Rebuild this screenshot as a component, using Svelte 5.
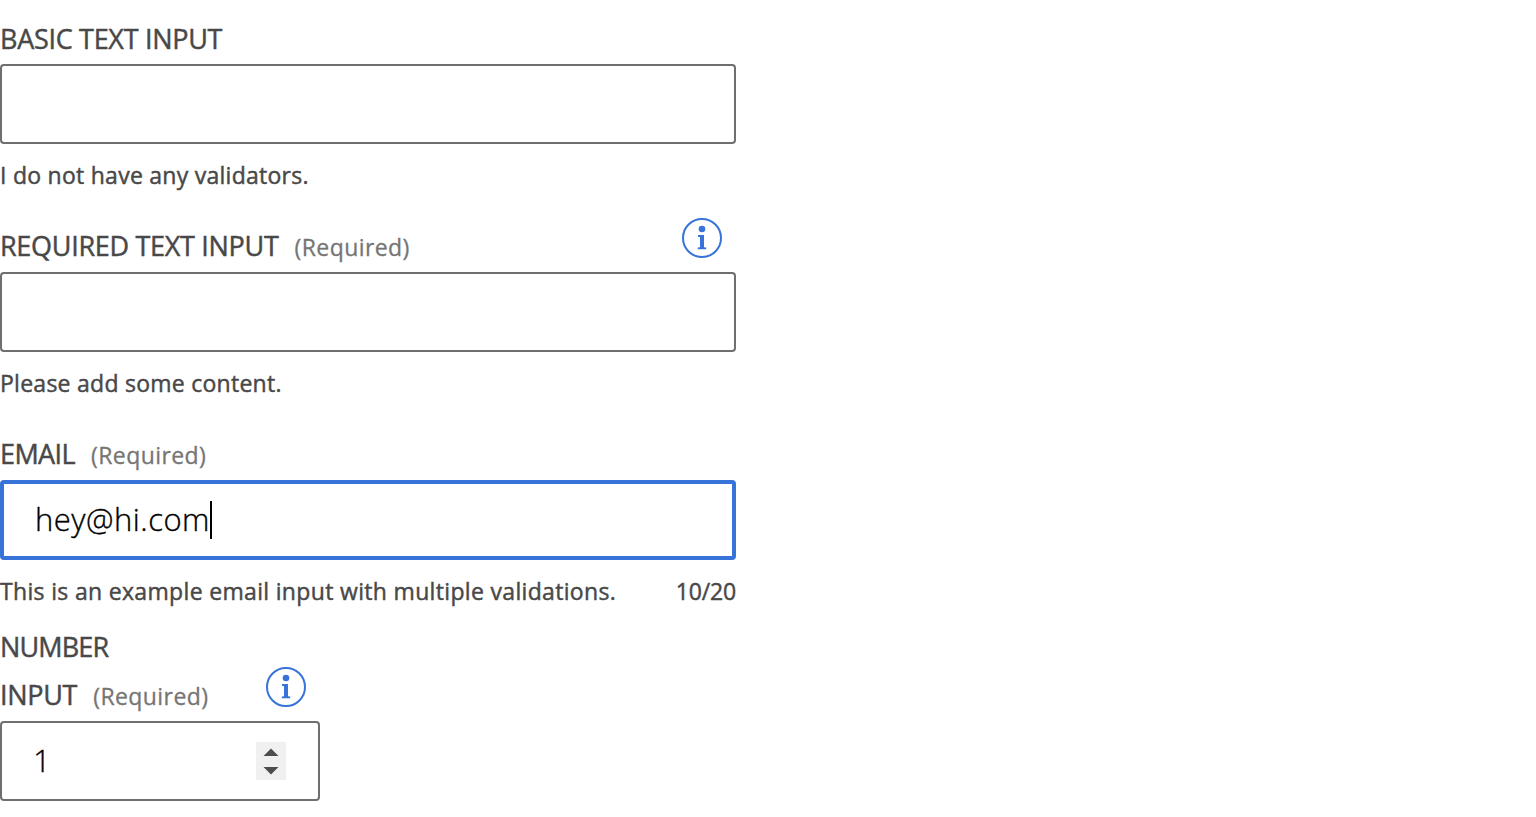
<script>
  const email = 'hey@hi.com';
</script>

{#snippet info()}
  <svg class="info" width="40" height="40" viewBox="0 0 40 40" aria-hidden="true">
    <circle cx="20" cy="20" r="19" fill="none" stroke="#3773d8" stroke-width="2" />
    <circle cx="20" cy="11" r="3.3" fill="#3773d8" />
    <path d="M16 17h6v12.200l2.200.3V31.200h-8.400v-1.700l2.200-.3v-10l-2-.5z" fill="#3773d8" />
  </svg>
{/snippet}

<form>
  <div class="field first">
    <div class="head"><div class="label">BASIC TEXT INPUT</div></div>
    <div class="box"></div>
    <div class="foot"><span>I do not have any validators.</span></div>
  </div>

  <div class="field">
    <div class="head">
      <div class="label">REQUIRED TEXT INPUT<span class="req">(Required)</span></div>
      {@render info()}
    </div>
    <div class="box"></div>
    <div class="foot"><span>Please add some content.</span></div>
  </div>

  <div class="field">
    <div class="head">
      <div class="label tight">EMAIL<span class="req">(Required)</span></div>
    </div>
    <div class="box focus"><span>{email}</span><i class="caret"></i></div>
    <div class="foot">
      <span class="long">This is an example email input with multiple validations.</span>
      <span class="count">{email.length}/20</span>
    </div>
  </div>

  <div class="field small">
    <div class="head">
      <div class="label"><span class="number">NUMBER</span><br />INPUT<span class="req">(Required)</span></div>
      {@render info()}
    </div>
    <div class="box">
      <span>1</span>
      <svg class="spin" width="30" height="38" viewBox="0 0 30 38" aria-hidden="true">
        <rect width="30" height="38" fill="#f0f0f0" />
        <path d="M15 6.5l7.5 7.5h-15zM15 32.500l7.500-7.500h-15z" fill="#4d4d4d" />
      </svg>
    </div>
  </div>
</form>

<style>
  :global(body) {
    background: #fff;
    overflow: hidden;
  }
  form {
    width: 736px;
    font-family: 'Open Sans', sans-serif;
    color: #484848;
    -webkit-text-stroke: 0.45px currentColor;
  }
  .field {
    height: 208px;
  }
  .first .head {
    height: 64px;
  }
  .head {
    box-sizing: border-box;
    height: 64px;
    display: flex;
    justify-content: space-between;
    align-items: flex-end;
    padding: 0 14px 1px 0;
  }
  .field:not(.first) .head {
    padding-bottom: 2px;
  }
  .label {
    font-size: 27px;
    line-height: 48px;
    letter-spacing: -0.3px;
    white-space: nowrap;
  }
  .tight {
    letter-spacing: -0.6px;
  }
  .number {
    letter-spacing: -0.85px;
  }
  .req {
    margin-left: 16px;
    font-size: 23px;
    line-height: 1;
    letter-spacing: 0.42px;
    color: #757575;
    -webkit-text-stroke: 0.3px currentColor;
  }
  .info {
    display: block;
    margin-bottom: 12px;
  }
  .box {
    box-sizing: border-box;
    height: 80px;
    padding: 0 32px;
    border: 2px solid #6f6f6f;
    border-radius: 4px;
    display: flex;
    align-items: center;
    font-size: 31px;
    font-weight: 300;
    letter-spacing: 0.5px;
    color: #000;
    -webkit-text-stroke: 0.35px #000;
  }
  .box span {
    padding-bottom: 2px;
  }
  .focus {
    border: 4px solid #3773d8;
    padding: 0 31px;
  }
  .caret {
    width: 2px;
    height: 38px;
    background: #000;
  }
  .foot {
    display: flex;
    justify-content: space-between;
    margin-top: 15px;
    font-size: 23px;
    line-height: 32px;
    letter-spacing: 0.26px;
    white-space: nowrap;
  }
  .foot .long {
    letter-spacing: 0.33px;
  }
  .foot .count {
    letter-spacing: -0.15px;
  }
  .small {
    width: 320px;
    height: 177px;
  }
  .small .head {
    height: 97px;
  }
  .small .box {
    justify-content: space-between;
    padding-left: 31px;
  }
</style>
